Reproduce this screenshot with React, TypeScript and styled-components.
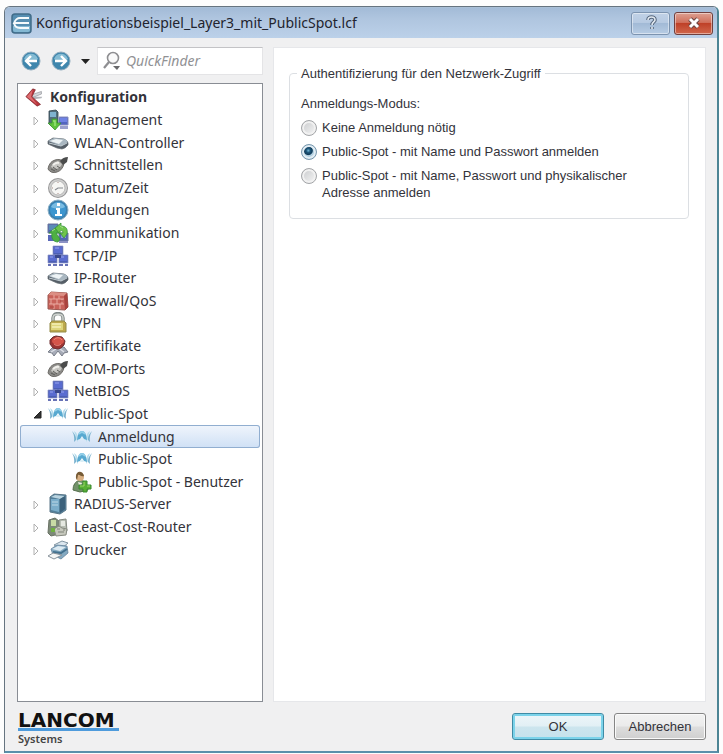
import React, { useState } from "react";
import styled, { createGlobalStyle } from "styled-components";

const uiFont = `"Noto Sans", "Open Sans", sans-serif`;
const dialogFont = `"Liberation Sans", Arial, sans-serif`;

const GlobalStyle = createGlobalStyle`
  * { box-sizing: border-box; }
  body { margin: 0; background: #fdfdfd; color: #33333a; font-family: ${uiFont}; }
  button, input { font: inherit; color: inherit; }
`;

const Page = styled.div`
  min-height: 100vh;
  padding: 6px 4px 1px;
  display: flex;
`;

const Window = styled.main`
  flex: 1;
  min-width: 0;
  display: flex;
  flex-direction: column;
  background: #f0f0f1;
  border: 1px solid #667480;
  border-right: 2px solid #4c8494;
  border-bottom: 2px solid #5a90ab;
  border-radius: 6px 6px 0 0;
  overflow: hidden;
`;

const TitleBar = styled.header`
  height: 31px;
  display: flex;
  align-items: center;
  gap: 4px;
  padding: 0 4px 0 6px;
  border-top: 1px solid #a9bfd6;
  background: linear-gradient(#a3bbd7, #afc5df 35%, #bcd1e9);
`;

const Title = styled.h1`
  flex: 1;
  min-width: 0;
  margin: 0;
  overflow: hidden;
  white-space: nowrap;
  text-overflow: ellipsis;
  font-size: 14px;
  line-height: 22px;
  font-weight: 400;
  color: #22242e;
`;

const CaptionButton = styled.button<{ $danger?: boolean }>`
  width: 39px;
  height: 23px;
  padding: 0;
  display: grid;
  place-items: center;
  border-radius: 3px;
  border: 1px solid ${(p) => (p.$danger ? "#70403f" : "#7c93af")};
  box-shadow: inset 0 0 0 1px rgba(255, 255, 255, 0.45);
  background: ${(p) =>
    p.$danger
      ? "linear-gradient(#dda092, #d0705c 45%, #bf4128 50%, #d0674d)"
      : "linear-gradient(#c0d1e6, #b7cae2 45%, #a2bad6 50%, #b7cce4)"};
`;

const Columns = styled.div`
  flex: 1;
  display: grid;
  grid-template-columns: minmax(180px, 246px) minmax(0, 1fr);
  gap: 10px;
  padding: 9px 11px 0 12px;
`;

const Sidebar = styled.nav`
  display: flex;
  flex-direction: column;
  gap: 8px;
`;

const Toolbar = styled.div`
  display: flex;
  align-items: center;
  height: 28px;
  padding-left: 4px;
`;

const NavButton = styled.button<{ $narrow?: boolean }>`
  width: ${(p) => (p.$narrow ? "16px" : "30px")};
  height: 24px;
  padding: 0;
  border: 0;
  background: none;
  display: flex;
  align-items: center;
`;

const SearchBox = styled.label`
  flex: 1;
  min-width: 0;
  height: 28px;
  display: flex;
  align-items: center;
  gap: 4px;
  padding: 0 4px;
  background: #fff;
  border: 1px solid #e4e4e6;
  border-top-color: #c3c3c6;
`;

const SearchInput = styled.input`
  flex: 1;
  min-width: 0;
  padding: 0;
  border: 0;
  outline: 0;
  background: none;
  font-size: 14px;
  line-height: 20px;
  font-style: italic;
  &::placeholder { color: #919194; opacity: 1; }
`;

const TreeFrame = styled.div`
  flex: 1;
  background: #fff;
  border: 1px solid #898d94;
  padding: 2px;
`;

const Tree = styled.ul`
  margin: 0;
  padding: 0;
  list-style: none;
  min-height: 475px;
  display: grid;
  grid-template-rows: repeat(21, 1fr);
`;

const TreeRow = styled.button<{ $level: number; $selected: boolean }>`
  width: 100%;
  height: 100%;
  padding: 0 2px 0 ${(p) => [5, 13, 51][p.$level]}px;
  display: flex;
  align-items: center;
  gap: ${(p) => (p.$level === 0 ? 6 : 5)}px;
  border: 0;
  border-radius: 3px;
  background: ${(p) => (p.$selected ? "linear-gradient(#f0f5fc, #cfe0f5)" : "none")};
  box-shadow: ${(p) => (p.$selected ? "inset 0 0 0 1px #91aed0" : "none")};
  text-align: left;
  white-space: nowrap;
  font-size: 14px;
  line-height: 20px;
  font-weight: ${(p) => (p.$level === 0 ? 700 : 400)};
`;

const Expander = styled.svg`
  width: 9px;
  height: 12px;
  flex: none;
`;

const Glyph = styled.svg<{ $size: number }>`
  width: ${(p) => p.$size}px;
  height: ${(p) => p.$size}px;
  flex: none;
  display: block;
`;

const Content = styled.section`
  background: #fff;
  border: 1px solid #e6e7ea;
  padding: 17px 16px 16px 15px;
  font-family: ${dialogFont};
  font-size: 13px;
  line-height: 17px;
`;

const Group = styled.fieldset`
  margin: 0;
  min-width: 0;
  padding: 13px 12px 17px 11px;
  border: 1px solid #dcdfe3;
  border-radius: 4px;
`;

const Legend = styled.legend`
  margin-left: -4px;
  padding: 0 4px;
`;

const Modes = styled.div`
  display: flex;
  flex-direction: column;
  gap: 7px;
`;

const ModeLabel = styled.label`
  display: flex;
  align-items: flex-start;
  gap: 5px;
`;

const ModeText = styled.span`
  max-width: 320px;
`;

const Radio = styled.input`
  appearance: none;
  flex: none;
  width: 16px;
  height: 16px;
  margin: 1px 0 0;
  border: 1px solid #a3a5a8;
  border-radius: 50%;
  box-shadow: inset 0 0 0 2px #f1f1f1;
  background: linear-gradient(135deg, #c8cacc, #f6f6f6);
  &:checked {
    border-color: #7897ad;
    box-shadow: inset 0 0 0 2px #e2edf4;
    background: radial-gradient(circle at 45% 40%, #70b5d5 0, #1d5679 2px, #123d5b 4px, #b3d1e2 5px);
  }
`;

const Footer = styled.footer`
  height: 49px;
  display: flex;
  align-items: flex-start;
  gap: 10px;
  padding: 11px 11px 0 13px;
`;

const Brand = styled.div`
  width: 101px;
  margin-right: auto;
  color: #111;
`;

const BrandName = styled.div`
  font: 700 20px/15px "DejaVu Sans", sans-serif;
  border-bottom: 3px solid #4e9bdc;
`;

const BrandSub = styled.div`
  font: 600 11px/15px ${uiFont};
  color: #444;
`;

const PushButton = styled.button<{ $primary?: boolean }>`
  width: 92px;
  height: 27px;
  padding: 0;
  border-radius: 3px;
  font: 13px/17px ${dialogFont};
  border: 1px solid ${(p) => (p.$primary ? "#3f8ba5" : "#858585")};
  box-shadow: inset 0 0 0 ${(p) => (p.$primary ? "2px #7bd3ea" : "1px #fafafa")};
  background: ${(p) =>
    p.$primary
      ? "linear-gradient(#eef6f9, #e2f0f5 48%, #cce5ee 52%, #c5e2ec)"
      : "linear-gradient(#f2f2f2, #ebebeb 48%, #dddddd 52%, #cfcfcf)"};
`;

type IconName =
  | "config" | "management" | "router" | "plug" | "clock" | "info" | "communication"
  | "network" | "firewall" | "lock" | "certificate" | "spot" | "user" | "server"
  | "cost" | "printer";

const drawings: Record<IconName, React.ReactNode> = {
  config: (
    <>
      <path d="m7 8 12-4v3L9 11z" fill="#d4d5d9" stroke="#85878d" strokeWidth=".7" />
      <path d="m8 10 12 0-1 2-9 1z" fill="#b3b5ba" />
      <path d="M1 10 9 1l3 1-4 8 10 9-4 2z" fill="#b9353c" stroke="#7c2a30" strokeWidth=".8" />
      <path d="m2 10 7-8-2 8 7 9z" fill="#dd6d70" />
    </>
  ),
  management: (
    <>
      <path d="M2 2 9 1l2 2v13l-7 1-2-2z" fill="#536f7c" stroke="#30434b" strokeWidth=".8" />
      <path d="M3 3h6v5H3z" fill="#7fb3cf" />
      <path d="M12 8h9v8h-9z" fill="#5265c0" stroke="#8a90bf" />
      <path d="M13 9h7v4h-7z" fill="#6f82e4" />
      <path d="M13 17h8v3h-8z" fill="#9ba0cd" />
      <path d="M5 10h5v4h4l-6 7-7-7h4z" fill="#5fc23c" stroke="#3a9434" strokeWidth=".8" />
      <path d="M6 12h2v5" fill="none" stroke="#9ce47c" strokeWidth="1.4" />
    </>
  ),
  router: (
    <>
      <path d="M1 9 6 6l11 1q4 2 4 4v2q-2 3-6 4l-5-1-9-4z" fill="#555e67" stroke="#5f676d" strokeWidth=".7" />
      <path d="m1 9 6-3 10 1q3 1 4 3l-7 4z" fill="#a9b7c1" />
      <path d="m3 9 6-2 7 1-4 4z" fill="#edf3f5" />
      <path d="m2 11 12 3 6-3" fill="none" stroke="#c3ced4" />
    </>
  ),
  plug: (
    <>
      <path d="M1 15q1-7 7-9 6-2 9 3-1 7-7 9-6 2-9-3z" fill="#8d8c89" stroke="#6e6c68" />
      <path d="M4 13q2-5 7-6l4 3q-2 5-7 5z" fill="#c7c6c2" />
      <path d="M6 11q3-3 6-2" fill="none" stroke="#f1f0ec" strokeWidth="2" />
      <path d="M13 7q3-4 8-4l-1 5-4 3z" fill="#4b4c4c" />
      <path d="m6 13 4 3m-6-1 4 2m2-5 3 2" stroke="#5d5d5a" />
    </>
  ),
  clock: (
    <>
      <circle cx="11" cy="11" r="10" fill="#969697" />
      <circle cx="11" cy="11" r="9" fill="#d0d0d0" />
      <circle cx="11" cy="11" r="7" fill="#f6f6f4" stroke="#a5a5a5" strokeWidth=".7" />
      <path d="m8 13 3-2h5" fill="none" stroke="#868990" strokeWidth="1.2" />
      <path d="M11 5v1m0 10v1M5 11h1" stroke="#a98c88" />
    </>
  ),
  info: (
    <>
      <circle cx="11" cy="11" r="10" fill="#3b7fae" stroke="#8cb0c6" />
      <circle cx="11" cy="11" r="8" fill="#3d96cf" />
      <path d="M4 8c2-6 12-6 14 0-4 2-10 2-14 0" fill="#7bbce2" />
      <path d="M9 9h4v6h2v2H8v-2h2v-4H9zM10 4h3v3h-3z" fill="#fff" />
    </>
  ),
  communication: (
    <>
      <path d="M1 2h10v9H1zM12 11h9v8h-9z" fill="#5266b3" stroke="#6a789b" />
      <path d="M2 3h8v5H2z" fill="#5a8cb7" />
      <path d="M14 13h5v3h-5z" fill="#8797dc" />
      <path d="M1 13h8v6H1z" fill="#5968b8" />
      <path d="M12 20h9" stroke="#8c92c5" strokeWidth="2" />
      <path d="m7 7 7-6v3c5 0 7 3 6 8l-3 4-4-5h3c0-2-1-3-3-2v3z" fill="#6fc44b" stroke="#35933a" strokeWidth=".8" />
      <path d="m2 11 6-5 4 5H9l4 6-2 3c-5 0-7-4-6-9z" fill="#4fb043" stroke="#35933a" strokeWidth=".8" />
      <path d="m5 9 3-2m5-3 3 2" stroke="#a5e38a" />
    </>
  ),
  network: (
    <>
      <path d="M6 1h10v9H6zM1 10h9v8H1zM12 10h9v8h-9z" fill="#4c5fb3" stroke="#8a93c9" strokeWidth=".7" />
      <path d="M7 2h8v6H7zM2 11h7v5H2zM13 11h7v5h-7z" fill="#5a6cd0" />
      <path d="M8 10h6v3H8z" fill="#3a488b" />
      <path d="M1 20h3m2 0h4m2 0h4m2 0h3" stroke="#6872b6" strokeWidth="2" />
      <path d="M8 3h4M3 12h3m8 0h3" stroke="#97a3ee" />
    </>
  ),
  firewall: (
    <>
      <path d="m1 5 3-3 16 1 1 14-3 3-17-1z" fill="#c8625a" stroke="#9a5952" />
      <path d="m1 5 3-3 16 1-3 3z" fill="#dc8f84" />
      <path d="m17 6 3-3 1 14-3 3z" fill="#a9433e" />
      <path d="M2 9h15m-15 5h15M7 5v4m5-3v3M4 9v5m6-5v5m5-5v5m-8 0v5m6-5v5" fill="none" stroke="#edb2a9" strokeWidth=".9" />
      <path d="M3 17h4m6-6h3" stroke="#a8423c" />
    </>
  ),
  lock: (
    <>
      <path d="M6 11V6c0-6 10-6 10 0v5" fill="none" stroke="#818988" strokeWidth="3.4" />
      <path d="M6 11V6c0-5 10-5 10 0v5" fill="none" stroke="#cfd3cf" strokeWidth="1.4" />
      <path d="m3 11 2-2h12l2 2v9H3z" fill="#bda94c" stroke="#938b48" />
      <path d="M4 11h12v7H4z" fill="#ded67c" />
      <path d="M5 12h9m-9 3h9" stroke="#f5efb6" strokeWidth="1.4" />
    </>
  ),
  certificate: (
    <>
      <path d="m5 13-4 4 4 1 2 3 4-5 4 5 2-3 4-1-4-5z" fill="#a7acb8" stroke="#797e89" />
      <path d="m4 17 5-3m8 3-4-3" stroke="#dde0e7" strokeWidth="1.4" />
      <path d="m6 2 3-1 6 1 3 4-1 4-3 3-3 1-5-1-3-4V5z" fill="#9c3432" stroke="#703032" />
      <ellipse cx="11" cy="6" rx="6" ry="4" fill="#d55449" />
      <path d="M7 5c2-3 6-3 8 0M7 9c2 2 5 2 7 0" fill="none" stroke="#eb8a7d" />
    </>
  ),
  spot: (
    <>
      <path d="M1 5q3 5 2 11l2-2q1-4-4-9zM21 5q-3 5-2 11l-2-2q-1-4 4-9z" fill="#7ab2cf" />
      <path d="M3 5q5 3 4 11l-2-3Q5 9 3 5zM19 5q-5 3-4 11l2-3q0-4 2-8z" fill="#b4dcec" />
      <path d="M6 14q1-9 5-9t5 9l-3-1-2-3-2 3z" fill="#58a9d0" />
      <path d="M8 8q3-4 6 0" fill="none" stroke="#93cfe8" strokeWidth="2" />
      <path d="m9 14 2-3 2 3z" fill="#dbeff6" />
    </>
  ),
  user: (
    <>
      <path d="M2 19q0-8 7-10 7 1 8 10l-8 2z" fill="#73926a" stroke="#566f4d" />
      <circle cx="9" cy="6" r="4" fill="#d9b083" />
      <path d="M5 7c-1-8 7-8 8-2-3 1-5-2-6-1L6 9z" fill="#765b36" />
      <path d="m7 11 2 6 2-5" fill="#f0eee7" />
      <path d="M12 10h4v4h4v4h-4v3h-4v-3H8v-4h4z" fill="#58af34" stroke="#3b8a31" />
      <path d="M13 11v4H9m7 0h3" fill="none" stroke="#9bd36b" />
    </>
  ),
  server: (
    <>
      <path d="m3 4 4-3 12 1v15l-6 4-10-2z" fill="#527f9a" stroke="#5a7789" />
      <path d="m4 4 4-2 10 1-5 3z" fill="#b9d3df" />
      <path d="m13 6 5-3v13l-5 4z" fill="#3c617b" />
      <path d="M4 6h8v13l-8-2z" fill="#7aadca" />
      <path d="M5 9h6m-6 3h6" stroke="#bcd8e6" />
    </>
  ),
  cost: (
    <>
      <path d="m2 4 6-2 4 3v13l-8 2-3-3z" fill="#7c8a78" stroke="#6a7265" />
      <path d="M4 4h5v6H4z" fill="#c8dba5" />
      <path d="m12 4 7-1 1 12-8 2z" fill="#b8beb4" stroke="#858a82" />
      <path d="M14 5h4v5h-4z" fill="#e6e9e2" />
      <path d="m7 13 5-3 3 2 5 1-1 6-10 1z" fill="#c6c8bd" stroke="#868a80" />
      <path d="M4 12h4v4H4z" fill="#6eb03f" />
      <path d="M10 13h3m-2 3h6m-1-2h2" stroke="#7f8378" />
    </>
  ),
  printer: (
    <>
      <path d="m7 6 8-4 6 2-7 6z" fill="#dce7ef" stroke="#8195a2" />
      <path d="m4 10 6-4 10 1 1 7-7 6-8-4z" fill="#83a9c1" stroke="#64819a" strokeWidth=".8" />
      <path d="m5 10 6-3 8 1-6 4z" fill="#dceaf2" />
      <path d="m6 13 8 1 6-4" fill="none" stroke="#42708e" strokeWidth="2" />
      <path d="m1 17 5-3 9 2-8 4z" fill="#f5f6f6" stroke="#8a949c" />
    </>
  ),
};

interface TreeNode {
  id: string;
  label: string;
  icon: IconName;
  level: number;
  open?: boolean;
}

const nodes: TreeNode[] = [
  { id: "config", label: "Konfiguration", icon: "config", level: 0, open: true },
  { id: "management", label: "Management", icon: "management", level: 1 },
  { id: "wlan", label: "WLAN-Controller", icon: "router", level: 1 },
  { id: "interfaces", label: "Schnittstellen", icon: "plug", level: 1 },
  { id: "time", label: "Datum/Zeit", icon: "clock", level: 1 },
  { id: "messages", label: "Meldungen", icon: "info", level: 1 },
  { id: "communication", label: "Kommunikation", icon: "communication", level: 1 },
  { id: "tcpip", label: "TCP/IP", icon: "network", level: 1 },
  { id: "iprouter", label: "IP-Router", icon: "router", level: 1 },
  { id: "firewall", label: "Firewall/QoS", icon: "firewall", level: 1 },
  { id: "vpn", label: "VPN", icon: "lock", level: 1 },
  { id: "certs", label: "Zertifikate", icon: "certificate", level: 1 },
  { id: "com", label: "COM-Ports", icon: "plug", level: 1 },
  { id: "netbios", label: "NetBIOS", icon: "network", level: 1 },
  { id: "spot", label: "Public-Spot", icon: "spot", level: 1, open: true },
  { id: "login", label: "Anmeldung", icon: "spot", level: 2 },
  { id: "spotpage", label: "Public-Spot", icon: "spot", level: 2 },
  { id: "users", label: "Public-Spot - Benutzer", icon: "user", level: 2 },
  { id: "radius", label: "RADIUS-Server", icon: "server", level: 1 },
  { id: "lcr", label: "Least-Cost-Router", icon: "cost", level: 1 },
  { id: "printer", label: "Drucker", icon: "printer", level: 1 },
];

const modes = [
  "Keine Anmeldung nötig",
  "Public-Spot - mit Name und Passwort anmelden",
  "Public-Spot - mit Name, Passwort und physikalischer Adresse anmelden",
];

function ArrowIcon({ forward = false }: { forward?: boolean }) {
  return (
    <Glyph $size={20} viewBox="0 0 20 20" aria-hidden="true">
      <circle cx="10" cy="10" r="9" fill="#3f86ad" stroke="#8fabbd" />
      <path d="M3 8c2-7 12-7 14 0-4 3-10 3-14 0" fill="#84bbd3" />
      <path
        d={forward ? "M4 10h10M10 5l5 5-5 5" : "M16 10H6m4-5-5 5 5 5"}
        fill="none"
        stroke="#fff"
        strokeWidth="2.4"
      />
    </Glyph>
  );
}

export default function App() {
  const [selected, setSelected] = useState("login");
  const [mode, setMode] = useState(1);

  return (
    <>
      <GlobalStyle />
      <Page>
        <Window>
          <TitleBar>
            <Glyph $size={21} viewBox="0 0 21 21" aria-hidden="true">
              <rect x="1" y="1" width="19" height="19" rx="3" fill="#568eb1" stroke="#416c89" strokeWidth="1.5" />
              <path d="M2 13h17v4q0 2-2 2H4q-2 0-2-2z" fill="#83b8d3" />
              <path d="M18 5H9q-4 0-6 5h15M3 10q1 5 6 5h9" fill="none" stroke="#f5fafc" strokeWidth="1.8" />
            </Glyph>
            <Title>Konfigurationsbeispiel_Layer3_mit_PublicSpot.lcf</Title>
            <CaptionButton type="button" aria-label="Hilfe">
              <Glyph $size={16} viewBox="0 0 16 16" aria-hidden="true">
                <path d="M5 5c0-4 7-4 7 0 0 2-3 2-3 5m0 2v2" fill="none" stroke="#56677d" strokeWidth="3.6" />
                <path d="M5 5c0-4 7-4 7 0 0 2-3 2-3 5m0 2v2" fill="none" stroke="#e2e9f1" strokeWidth="1.6" />
              </Glyph>
            </CaptionButton>
            <CaptionButton type="button" $danger aria-label="Schließen">
              <Glyph $size={16} viewBox="0 0 16 16" aria-hidden="true">
                <path d="m4 4 8 8m0-8-8 8" stroke="#6b4745" strokeWidth="5" />
                <path d="m4 4 8 8m0-8-8 8" stroke="#fff" strokeWidth="3" />
              </Glyph>
            </CaptionButton>
          </TitleBar>

          <Columns>
            <Sidebar aria-label="Konfiguration">
              <Toolbar>
                <NavButton type="button" aria-label="Zurück"><ArrowIcon /></NavButton>
                <NavButton type="button" aria-label="Vorwärts"><ArrowIcon forward /></NavButton>
                <NavButton type="button" $narrow aria-label="Verlauf">
                  <Glyph $size={9} viewBox="0 0 9 9" aria-hidden="true">
                    <path d="M0 2h9L4.500 7z" fill="#222" />
                  </Glyph>
                </NavButton>
                <SearchBox>
                  <Glyph $size={20} viewBox="0 0 20 20" aria-hidden="true">
                    <circle cx="11" cy="7" r="5.500" fill="#fafafa" stroke="#8f8f92" strokeWidth="1.600" />
                    <path d="m7 11-5 6" stroke="#8f8f92" strokeWidth="2.200" />
                    <path d="M11 15h7l-3 4z" fill="#68686b" />
                  </Glyph>
                  <SearchInput aria-label="QuickFinder" placeholder="QuickFinder" />
                </SearchBox>
              </Toolbar>
              <TreeFrame>
                <Tree>
                  {nodes.map((n) => (
                    <li key={n.id}>
                      <TreeRow
                        type="button"
                        $level={n.level}
                        $selected={selected === n.id}
                        aria-current={selected === n.id}
                        onClick={() => setSelected(n.id)}
                      >
                        {n.level === 1 && (
                          <Expander viewBox="0 0 9 12" aria-hidden="true">
                            {n.open ? (
                              <path d="M8 3v7H1z" fill="#333" stroke="#222" />
                            ) : (
                              <path d="M1 3v8l4-4z" fill="#fff" stroke="#b0b0b0" />
                            )}
                          </Expander>
                        )}
                        <Glyph $size={n.level === 0 ? 19 : 22} viewBox="0 0 22 22" aria-hidden="true">
                          {drawings[n.icon]}
                        </Glyph>
                        <span>{n.label}</span>
                      </TreeRow>
                    </li>
                  ))}
                </Tree>
              </TreeFrame>
            </Sidebar>

            <Content>
              <Group>
                <Legend>Authentifizierung für den Netzwerk-Zugriff</Legend>
                <Modes role="radiogroup" aria-labelledby="mode-caption">
                  <span id="mode-caption">Anmeldungs-Modus:</span>
                  {modes.map((text, i) => (
                    <ModeLabel key={text}>
                      <Radio type="radio" name="mode" checked={mode === i} onChange={() => setMode(i)} />
                      <ModeText>{text}</ModeText>
                    </ModeLabel>
                  ))}
                </Modes>
              </Group>
            </Content>
          </Columns>

          <Footer>
            <Brand>
              <BrandName>LANCOM</BrandName>
              <BrandSub>Systems</BrandSub>
            </Brand>
            <PushButton type="button" $primary>OK</PushButton>
            <PushButton type="button">Abbrechen</PushButton>
          </Footer>
        </Window>
      </Page>
    </>
  );
}
